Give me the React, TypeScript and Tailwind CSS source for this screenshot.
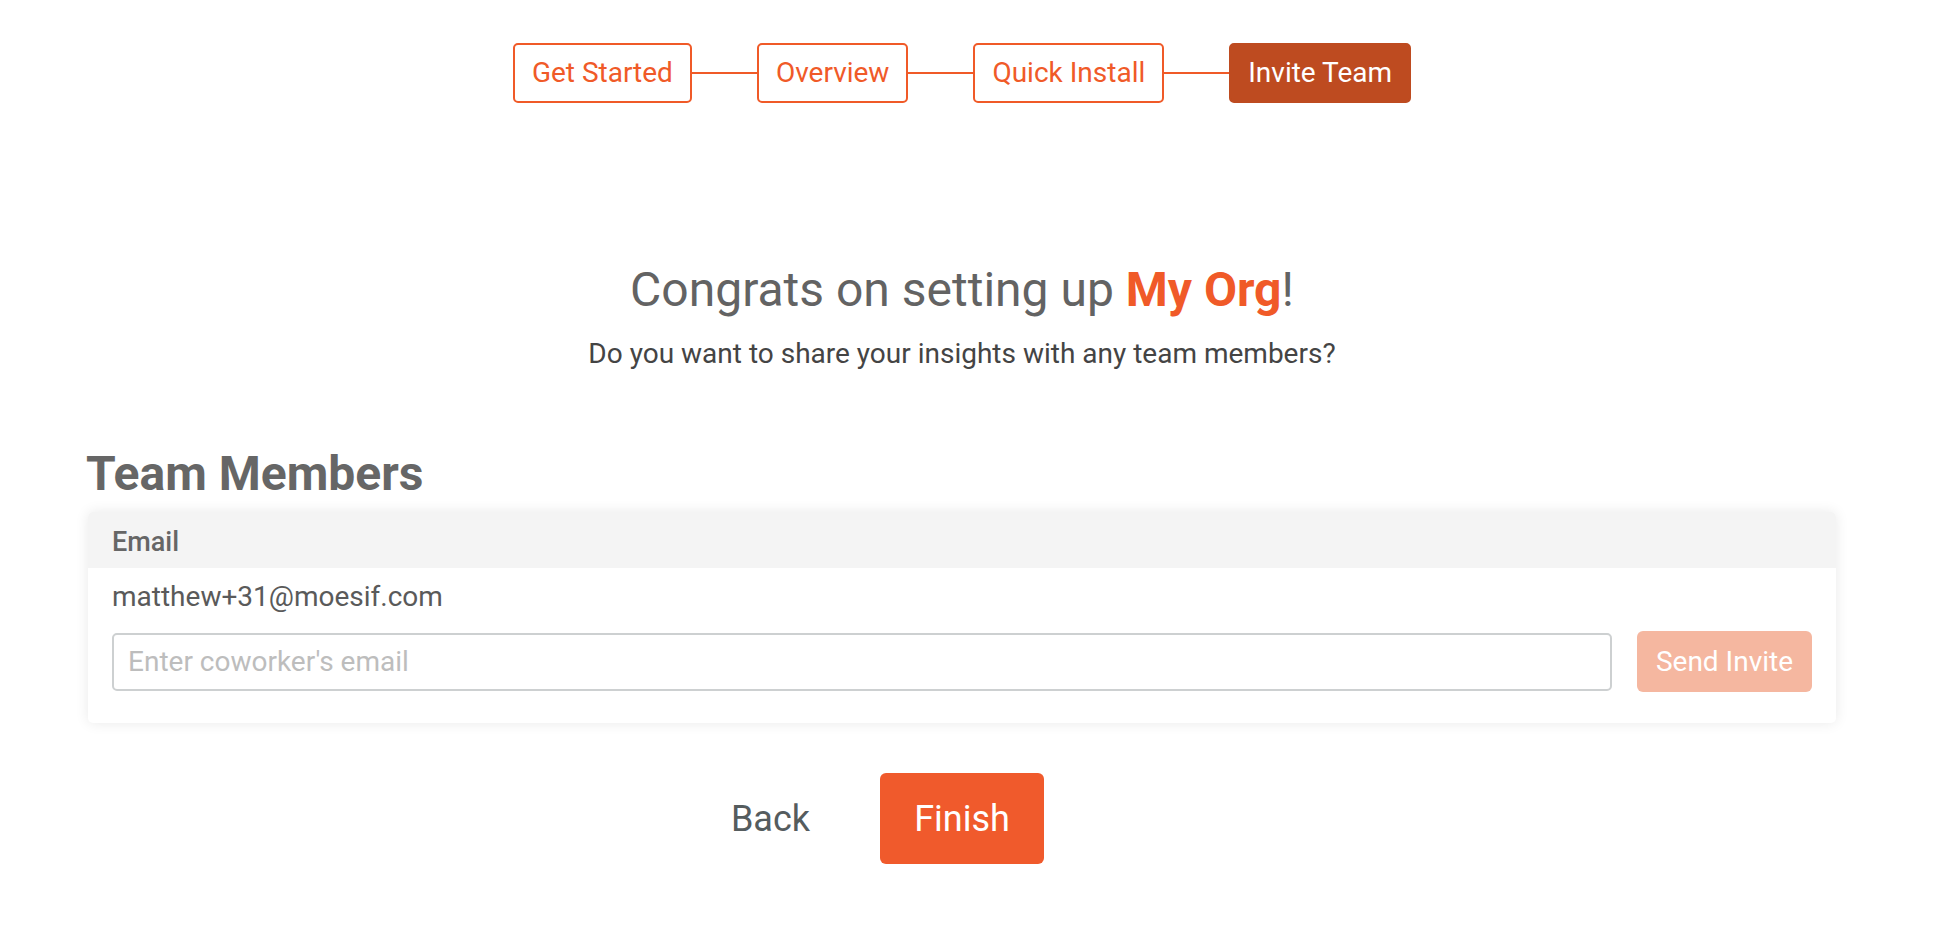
import { Fragment } from 'react'

const STEPS = ['Get Started', 'Overview', 'Quick Install', 'Invite Team']

function Stepper({ active }: { active: number }) {
  return (
    <div className="flex items-center justify-center">
      {STEPS.map((s, i) => (
        <Fragment key={s}>
          {i > 0 && <div className="h-[2px] w-[65px] bg-[#f05a28]" />}
          <div
            className={
              i === active
                ? 'flex h-[60px] items-center rounded-[5px] border-2 border-[#be4b20] bg-[#be4b20] px-[17px] text-[28px] leading-none text-white'
                : 'flex h-[60px] items-center rounded-[5px] border-2 border-[#f05a28] bg-white px-[17px] text-[28px] leading-none text-[#f05a28]'
            }
          >
            {s}
          </div>
        </Fragment>
      ))}
    </div>
  )
}

export default function App() {
  return (
    <div className="min-h-screen bg-white font-['Roboto',sans-serif]">
      <div className="w-[1924px] pt-[43px]">
        <Stepper active={3} />

        <div className="mt-[163px] flex flex-col items-center">
          <h1 className="text-[48px] leading-none font-normal text-[#636363]">
            Congrats on setting up <span className="font-bold text-[#f05a28]">My Org</span>!
          </h1>
          <p className="mt-[26px] text-[28px] leading-none text-[#444444]">
            Do you want to share your insights with any team members?
          </p>
        </div>

        <div className="px-[88px]">
          <h2 className="mt-[82px] -ml-[2px] text-[48px] leading-none font-bold text-[#666666]">Team Members</h2>

          <div className="mt-[14px] overflow-hidden rounded-[5px] bg-white shadow-[0_0_14px_rgba(0,0,0,0.09)]">
            <div className="flex h-[56px] items-center bg-[#f4f4f4] px-6 pt-[4px] text-[27px] leading-none font-medium text-[#666666]">
              Email
            </div>
            <div className="px-6 pt-[15px] pb-[31px]">
              <div className="text-[28px] leading-none text-[#5a5a5a]">matthew+31@moesif.com</div>
              <div className="mt-[20px] flex items-center gap-[25px]">
                <input
                  placeholder="Enter coworker's email"
                  className="h-[58px] flex-1 rounded-[5px] border-2 border-[#cdd0d1] px-[14px] text-[28px] text-[#555] placeholder:text-[#bdbdbd] focus:outline-none"
                />
                <button
                  disabled
                  className="h-[61px] w-[175px] rounded-[6px] bg-[#f5b7a0] text-[28px] text-white"
                >
                  Send Invite
                </button>
              </div>
            </div>
          </div>
        </div>

        <div className="mt-[50px] grid grid-cols-[1fr_auto_1fr] items-center">
          <div className="flex justify-end pr-[70px]">
            <button className="text-[36px] leading-none text-[#555c5e]">Back</button>
          </div>
          <button className="h-[91px] w-[164px] rounded-[6px] bg-[#f05a2c] text-[36px] text-white">Finish</button>
          <div />
        </div>
      </div>
    </div>
  )
}
